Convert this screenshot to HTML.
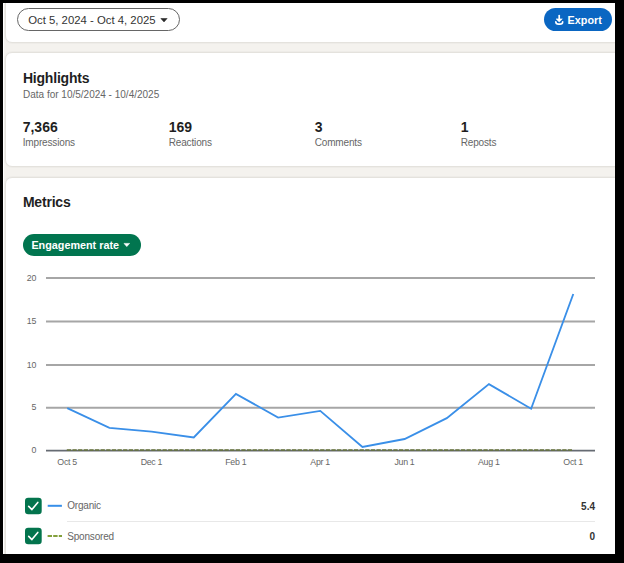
<!DOCTYPE html>
<html><head><meta charset="utf-8"><title>Analytics</title>
<style>
html,body{margin:0;padding:0;}
body{width:624px;height:563px;background:#000;position:relative;overflow:hidden;font-family:"Liberation Sans", sans-serif;}
.t{position:absolute;white-space:nowrap;}
</style></head><body>
<div style="position:absolute;left:0;top:0;width:624px;height:563px;overflow:hidden;">
<div style="position:absolute;left:3px;top:3px;width:612px;height:551px;background:#fff;"></div><div style="position:absolute;left:4px;top:4px;width:611px;height:550px;background:#f4f2ee;"></div><div style="position:absolute;left:5px;top:-10px;width:623px;height:51px;background:#fff;border:1px solid #e4e2dd;border-radius:7px;box-shadow:0 0 0 1px rgba(0,0,0,0.025);"></div>
<div style="position:absolute;left:5px;top:52.4px;width:623px;height:112.6px;background:#fff;border:1px solid #e4e2dd;border-radius:7px;box-shadow:0 0 0 1px rgba(0,0,0,0.025);"></div>
<div style="position:absolute;left:5px;top:176.6px;width:623px;height:421.4px;background:#fff;border:1px solid #e4e2dd;border-radius:7px;box-shadow:0 0 0 1px rgba(0,0,0,0.025);"></div>
<div style="position:absolute;left:17px;top:8px;width:161px;height:21px;border:1px solid #666;border-radius:12px;"></div>
<div class="t" style="left:28.20px;top:15.19px;font-size:11.35px;line-height:11.35px;font-weight:400;color:#333;">Oct 5, 2024 - Oct 4, 2025</div>
<svg style="position:absolute;left:160px;top:17px" width="8" height="6" viewBox="0 0 8 6"><path d="M0.9 1.5 L7.1 1.5 L4 4.9 Z" fill="#2a2a2a" stroke="#2a2a2a" stroke-width="0.6" stroke-linejoin="round"/></svg>
<div style="position:absolute;left:543.8px;top:8.2px;width:68.3px;height:22.5px;background:#0a66c2;border-radius:12px;"></div>
<svg style="position:absolute;left:550px;top:10px" width="20" height="20" viewBox="0 0 20 20"><path d="M9.2 5.6 V10" stroke="#fff" stroke-width="1.7" stroke-linecap="round"/><path d="M6.1 8.9 L12.3 8.9 L9.2 11.9 Z" fill="#fff" stroke="#fff" stroke-width="0.6" stroke-linejoin="round"/><path d="M5.8 11.7 C5.8 13.7 6.9 14.1 8.6 14.1 H9.9 C11.6 14.1 12.7 13.7 12.7 11.7" stroke="#fff" stroke-width="1.6" fill="none" stroke-linecap="round"/></svg><div class="t" style="left:567.60px;top:15.36px;font-size:10.8px;line-height:10.8px;font-weight:700;color:#fff;">Export</div>
<div class="t" style="left:22.90px;top:71.05px;font-size:14px;line-height:14px;font-weight:700;color:#1f1f1f;letter-spacing:-0.2px;">Highlights</div>
<div class="t" style="left:23.00px;top:89.73px;font-size:10.0px;line-height:10.0px;font-weight:400;color:#666;">Data for 10/5/2024 - 10/4/2025</div>
<div class="t" style="left:22.70px;top:119.95px;font-size:14px;line-height:14px;font-weight:700;color:#1f1f1f;">7,366</div>
<div class="t" style="left:22.70px;top:137.53px;font-size:10.0px;line-height:10.0px;font-weight:400;color:#666;letter-spacing:-0.15px;">Impressions</div>
<div class="t" style="left:168.70px;top:119.95px;font-size:14px;line-height:14px;font-weight:700;color:#1f1f1f;">169</div>
<div class="t" style="left:168.70px;top:137.53px;font-size:10.0px;line-height:10.0px;font-weight:400;color:#666;letter-spacing:-0.15px;">Reactions</div>
<div class="t" style="left:314.70px;top:119.95px;font-size:14px;line-height:14px;font-weight:700;color:#1f1f1f;">3</div>
<div class="t" style="left:314.70px;top:137.53px;font-size:10.0px;line-height:10.0px;font-weight:400;color:#666;letter-spacing:-0.15px;">Comments</div>
<div class="t" style="left:460.70px;top:119.95px;font-size:14px;line-height:14px;font-weight:700;color:#1f1f1f;">1</div>
<div class="t" style="left:460.70px;top:137.53px;font-size:10.0px;line-height:10.0px;font-weight:400;color:#666;letter-spacing:-0.15px;">Reposts</div>
<div class="t" style="left:22.90px;top:194.95px;font-size:14px;line-height:14px;font-weight:700;color:#1f1f1f;letter-spacing:-0.2px;">Metrics</div>
<div style="position:absolute;left:23px;top:234px;width:118px;height:22px;background:#01754f;border-radius:11px;"></div>
<div class="t" style="left:31.40px;top:240.26px;font-size:10.8px;line-height:10.8px;font-weight:700;color:#fff;">Engagement rate</div>
<svg style="position:absolute;left:123.3px;top:241.8px" width="8" height="6" viewBox="0 0 8 6"><path d="M1 1.4 L6.6 1.4 L3.8 4.6 Z" fill="#fff" stroke="#fff" stroke-width="0.6" stroke-linejoin="round"/></svg>
<svg style="position:absolute;left:0;top:0" width="624" height="563" viewBox="0 0 624 563">
<line x1="46" x2="595" y1="277.9" y2="277.9" stroke="#a6a6a6" stroke-width="2"/>
<line x1="46" x2="595" y1="321.4" y2="321.4" stroke="#a6a6a6" stroke-width="2"/>
<line x1="46" x2="595" y1="364.9" y2="364.9" stroke="#a6a6a6" stroke-width="2"/>
<line x1="46" x2="595" y1="407.65" y2="407.65" stroke="#a6a6a6" stroke-width="2"/>
<line x1="46" x2="595" y1="450.65" y2="450.65" stroke="#666b73" stroke-width="1.8"/>
<line x1="66.8" x2="572" y1="450.0" y2="450.0" stroke="#66733a" stroke-width="1.6" stroke-dasharray="4.3 1.33"/>
<polyline points="67.25,408.10 109.42,427.90 151.59,431.60 193.76,437.50 235.93,393.90 278.10,417.60 320.27,410.90 362.44,447.00 404.61,439.00 446.78,418.10 488.95,384.10 531.12,408.70 573.29,294.00" fill="none" stroke="#3a8fe8" stroke-width="1.85" stroke-linejoin="miter"/>
<line x1="47.7" x2="61.9" y1="505.8" y2="505.8" stroke="#378fe9" stroke-width="2"/>
<line x1="47.6" x2="62" y1="536" y2="536" stroke="#83a03c" stroke-width="2" stroke-dasharray="4.4 1.2"/>
<line x1="67" x2="595" y1="521.5" y2="521.5" stroke="#e8e8e8" stroke-width="1"/>
<rect x="25" y="497.8" width="16.7" height="16.4" rx="3.2" fill="#03744d"/>
<path d="M28.7 506.40000000000003 L31.9 509.6 L37.8 502.40000000000003" stroke="#fff" stroke-width="1.6" fill="none" stroke-linecap="round" stroke-linejoin="round"/>
<rect x="25" y="527.8" width="16.7" height="16.4" rx="3.2" fill="#03744d"/>
<path d="M28.7 536.4 L31.9 539.5999999999999 L37.8 532.4" stroke="#fff" stroke-width="1.6" fill="none" stroke-linecap="round" stroke-linejoin="round"/>
</svg>
<div class="t" style="right:587.50px;top:273.65px;font-size:8.8px;line-height:8.8px;font-weight:400;color:#666;">20</div>
<div class="t" style="right:587.50px;top:317.15px;font-size:8.8px;line-height:8.8px;font-weight:400;color:#666;">15</div>
<div class="t" style="right:587.50px;top:360.65px;font-size:8.8px;line-height:8.8px;font-weight:400;color:#666;">10</div>
<div class="t" style="right:587.50px;top:403.40px;font-size:8.8px;line-height:8.8px;font-weight:400;color:#666;">5</div>
<div class="t" style="right:587.50px;top:446.35px;font-size:8.8px;line-height:8.8px;font-weight:400;color:#666;">0</div>
<div class="t" style="left:-32.90px;width:200px;text-align:center;top:457.65px;font-size:8.8px;line-height:8.8px;font-weight:400;color:#666;letter-spacing:-0.3px;">Oct 5</div>
<div class="t" style="left:51.44px;width:200px;text-align:center;top:457.65px;font-size:8.8px;line-height:8.8px;font-weight:400;color:#666;letter-spacing:-0.3px;">Dec 1</div>
<div class="t" style="left:135.78px;width:200px;text-align:center;top:457.65px;font-size:8.8px;line-height:8.8px;font-weight:400;color:#666;letter-spacing:-0.3px;">Feb 1</div>
<div class="t" style="left:220.12px;width:200px;text-align:center;top:457.65px;font-size:8.8px;line-height:8.8px;font-weight:400;color:#666;letter-spacing:-0.3px;">Apr 1</div>
<div class="t" style="left:304.46px;width:200px;text-align:center;top:457.65px;font-size:8.8px;line-height:8.8px;font-weight:400;color:#666;letter-spacing:-0.3px;">Jun 1</div>
<div class="t" style="left:388.80px;width:200px;text-align:center;top:457.65px;font-size:8.8px;line-height:8.8px;font-weight:400;color:#666;letter-spacing:-0.3px;">Aug 1</div>
<div class="t" style="left:473.14px;width:200px;text-align:center;top:457.65px;font-size:8.8px;line-height:8.8px;font-weight:400;color:#666;letter-spacing:-0.3px;">Oct 1</div>
<div class="t" style="left:67.20px;top:501.04px;font-size:10.0px;line-height:10.0px;font-weight:400;color:#666;letter-spacing:-0.18px;">Organic</div>
<div class="t" style="left:67.20px;top:531.93px;font-size:10.0px;line-height:10.0px;font-weight:400;color:#666;letter-spacing:-0.18px;">Sponsored</div>
<div class="t" style="right:29.00px;top:501.64px;font-size:10px;line-height:10px;font-weight:700;color:#333;">5.4</div>
<div class="t" style="right:29.00px;top:532.03px;font-size:10px;line-height:10px;font-weight:700;color:#333;">0</div>

</div>
<div style="position:absolute;left:615px;top:0;width:9px;height:563px;background:#000;"></div>
<div style="position:absolute;left:0;top:554px;width:624px;height:9px;background:#000;"></div>
<div style="position:absolute;left:0;top:0;width:624px;height:3px;background:#000;"></div>
<div style="position:absolute;left:0;top:0;width:3px;height:563px;background:#000;"></div>
</body></html>
